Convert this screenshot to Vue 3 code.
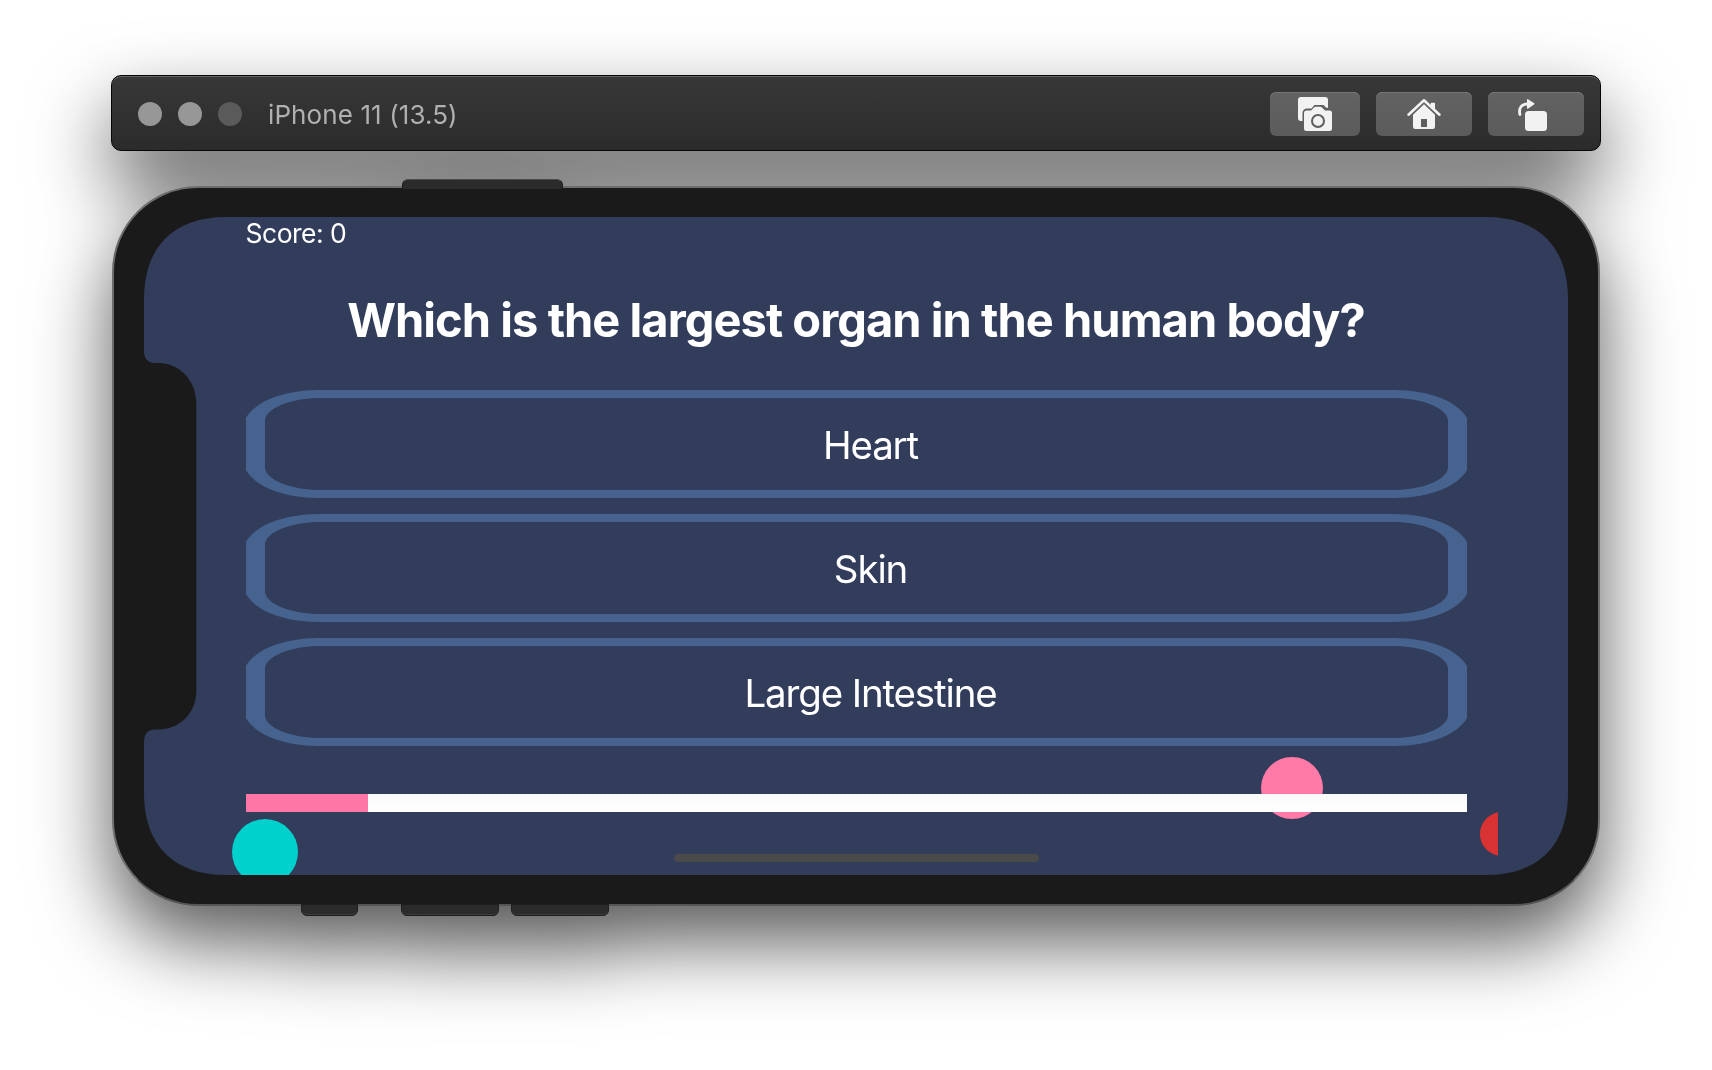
<script setup>
const answers = ['Heart', 'Skin', 'Large Intestine']
const progress = 10

// Smooth-corner outline for the 1424 x 658 display
const W = 1424
const H = 658
const a = 82
const k = 29.7
const screenPath =
  `M${a} 0H${W - a}C${W - k} 0 ${W} ${k} ${W} ${a}` +
  `V${H - a}C${W} ${H - k} ${W - k} ${H} ${W - a} ${H}` +
  `H${a}C${k} ${H} 0 ${H - k} 0 ${H - a}` +
  `V${a}C0 ${k} ${k} 0 ${a} 0Z`
</script>

<template>
  <main class="desktop">
    <div class="simulator">
      <header class="titlebar">
        <div class="lights"><i></i><i></i><i class="dim"></i></div>
        <h1 class="title">iPhone 11 (13.5)</h1>
        <div class="tools">
          <button class="tool narrow" aria-label="Screenshot">
            <svg width="36" height="36" viewBox="0 0 36 36">
              <path fill="#f2f2f2" d="M4 1H28a3 3 0 0 1 3 3V12L29 11.500L26.500 9H17.500L14.500 12.500H10a4.500 4.500 0 0 0-4.500 4.500V25H4a3 3 0 0 1-3-3V4a3 3 0 0 1 3-3Z" />
              <path fill="#f2f2f2" fill-rule="evenodd" d="M9.500 14.500H14L17 11.500Q17.700 10.800 18.700 10.800H23.300Q24.300 10.800 25 11.500L28 14.500H32.500Q35 14.500 35 17V32.500Q35 35 32.500 35H9.500Q7 35 7 32.500V17Q7 14.500 9.500 14.500ZM21 18a7 7 0 1 0 0 14a7 7 0 0 0 0-14ZM21 20a5 5 0 1 1 0 10a5 5 0 0 1 0-10Z" />
            </svg>
          </button>
          <button class="tool" aria-label="Home">
            <svg width="36" height="36" viewBox="0 0 36 36">
              <path fill="none" stroke="#f2f2f2" stroke-width="2.600" stroke-linecap="round" stroke-linejoin="round" d="M2.500 18.700L18 4.300L33.500 18.700" />
              <path fill="#f2f2f2" d="M24.700 8V7.500Q24.700 6.700 25.500 6.700H28.200Q29 6.700 29 7.500V14L24.700 10Z" />
              <path fill="#f2f2f2" fill-rule="evenodd" d="M18 8.300L29 18.800V30.500Q29 33 26.500 33H9.500Q7 33 7 30.500V18.800ZM15 23V31H21V23Z" />
            </svg>
          </button>
          <button class="tool" aria-label="Rotate">
            <svg width="36" height="36" viewBox="0 0 36 36">
              <path fill="none" stroke="#f2f2f2" stroke-width="2.800" stroke-linecap="round" d="M1.900 18.500C0.500 12 3.500 8 9.500 7.800" />
              <path fill="#f2f2f2" d="M9 4Q9 2.600 10.300 3.400L16 7Q17 7.800 16 8.600L10.300 12.600Q9 13.300 9 12Z" />
              <rect x="7" y="15" width="22" height="20" rx="3.500" fill="#f2f2f2" />
            </svg>
          </button>
        </div>
      </header>

      <section class="phone">
        <i class="key power"></i>
        <i class="key mute"></i>
        <i class="key vol-up"></i>
        <i class="key vol-down"></i>
        <div class="bezel">
          <div class="screen" :style="{ clipPath: `path('${screenPath}')` }">
            <svg class="notch" width="54" height="392" viewBox="0 0 54 392">
              <path fill="#1a1a1a" d="M0 0C0 8 4 12 11 12H14C36 12 52.300 30 52.300 52V340C52.300 362 36 378.500 14 378.500H11C4 378.500 0 383 0 391Z" />
            </svg>
            <i class="ball pink"></i>
            <i class="ball teal"></i>
            <div class="edge"><i class="ball red"></i></div>
            <div class="quiz">
              <p class="score">Score: 0</p>
              <h2 class="question">Which is the largest organ in the human body?</h2>
              <div class="answers">
                <button v-for="answer in answers" :key="answer" class="answer">
                  <svg class="outline" width="1221" height="108" viewBox="0 0 1221 108">
                    <path
                      fill="#46638f"
                      fill-rule="evenodd"
                      d="M0 28C9 12 36 0 74 0H1147C1185 0 1212 12 1221 28V80C1212 96 1185 108 1147 108H74C36 108 9 96 0 80ZM19 30V78C20.500 90 45 100 74 100H1147C1176 100 1200.500 90 1202 78V30C1200.500 18 1176 8 1147 8H74C45 8 20.500 18 19 30Z"
                    />
                  </svg>
                  <span>{{ answer }}</span>
                </button>
              </div>
              <div class="progress"><div class="fill" :style="{ width: progress + '%' }"></div></div>
            </div>
            <i class="indicator"></i>
          </div>
        </div>
      </section>
    </div>
  </main>
</template>

<style>
body {
  margin: 0;
  background: #fff;
  overflow: hidden;
}
</style>

<style scoped>
* {
  box-sizing: border-box;
}
.desktop {
  width: 1712px;
  height: 1070px;
  padding: 75px 111px 0;
  overflow: hidden;
  background: #fff;
  font-family: Inter, "Liberation Sans", sans-serif;
}
.simulator {
  width: 1490px;
  filter: drop-shadow(0 36px 39px rgba(0, 0, 0, 0.65));
}
.titlebar {
  display: flex;
  align-items: center;
  height: 76px;
  padding: 2px 16px 0 26px;
  border: 1px solid #060606;
  border-radius: 10px;
  background: linear-gradient(#383838, #2b2b2b);
  box-shadow: inset 0 1px 0 #646464;
}
.lights {
  display: flex;
  gap: 16px;
}
.lights i {
  width: 24px;
  height: 24px;
  border-radius: 50%;
  background: #979797;
}
.lights .dim {
  background: #5a5a5a;
}
.title {
  margin: 2px 0 0 26px;
  color: #b0b0b0;
  font-size: 26px;
  font-weight: 400;
  letter-spacing: 0.1px;
  line-height: 32px;
  white-space: nowrap;
}
.tools {
  display: flex;
  gap: 16px;
  margin-left: auto;
}
.tool {
  display: flex;
  align-items: center;
  justify-content: center;
  width: 96px;
  height: 44px;
  padding: 0;
  border: 0;
  border-radius: 6px;
  background: linear-gradient(#626262, #5b5b5b);
  box-shadow: inset 0 1px 0 #777;
}
.tool.narrow {
  width: 90px;
}
.phone {
  position: relative;
  width: 1488px;
  height: 720px;
  margin: 35px 0 0 1px;
}
.bezel {
  position: relative;
  height: 100%;
  padding: 29px 30px;
  border: 2px solid #6d6d6d;
  border-bottom-color: #555;
  border-radius: 86px;
  background: #1a1a1a;
}
.key {
  position: absolute;
  z-index: 1;
  background: #2b2b2b;
  border: 1px solid #1d1d1d;
}
.power {
  left: 290px;
  top: -7px;
  width: 161px;
  height: 10px;
  border-top-color: #4a4a4a;
  border-bottom: 0;
  border-radius: 6px 6px 0 0;
}
.mute,
.vol-up,
.vol-down {
  top: 718px;
  height: 12px;
  border-radius: 0 0 6px 6px;
  box-shadow: inset 0 -1px 0 #3c3c3c;
}
.mute {
  left: 189px;
  width: 57px;
}
.vol-up {
  left: 289px;
  width: 98px;
}
.vol-down {
  left: 399px;
  width: 98px;
}
.screen {
  position: relative;
  width: 1424px;
  height: 658px;
  padding: 0 101.500px;
  background: #323c5b;
}
.notch {
  position: absolute;
  left: 0;
  top: 133.500px;
}
.ball {
  position: absolute;
  border-radius: 50%;
}
.pink {
  left: 1117px;
  top: 540px;
  width: 62px;
  height: 62px;
  background: #ff7aa7;
}
.teal {
  left: 88px;
  top: 602px;
  width: 66px;
  height: 66px;
  background: #00d1cd;
}
.edge {
  position: absolute;
  left: 1335px;
  top: 594px;
  width: 19px;
  height: 46px;
  overflow: hidden;
}
.red {
  left: 1px;
  top: 1px;
  width: 44px;
  height: 44px;
  background: #d83233;
}
.quiz {
  position: relative;
  display: flex;
  flex-direction: column;
  width: 1221px;
  color: #fff;
}
.score {
  margin: 0;
  font-size: 26.500px;
  letter-spacing: -0.500px;
  line-height: 32px;
}
.question {
  margin: 42px 0 0;
  font-size: 47px;
  font-weight: 700;
  letter-spacing: -0.950px;
  line-height: 58px;
  text-align: center;
  white-space: nowrap;
}
.answers {
  display: flex;
  flex-direction: column;
  gap: 16px;
  margin-top: 41px;
}
.answer {
  position: relative;
  display: flex;
  align-items: center;
  justify-content: center;
  height: 108px;
  padding: 2px 0 0 29px;
  border: 0;
  background: none;
  color: #fff;
  font: 400 38.500px/48px Inter, "Liberation Sans", sans-serif;
  letter-spacing: -1.150px;
}
.outline {
  position: absolute;
  left: 0;
  top: 0;
}
.progress {
  height: 18px;
  margin-top: 47.500px;
  background: linear-gradient(#f9f9fa, #fff);
}
.fill {
  height: 100%;
  background: #fd76a5;
}
.indicator {
  position: absolute;
  left: 529.500px;
  top: 637px;
  width: 365px;
  height: 8px;
  border-radius: 4px;
  background: #4a4a4a;
}
</style>
